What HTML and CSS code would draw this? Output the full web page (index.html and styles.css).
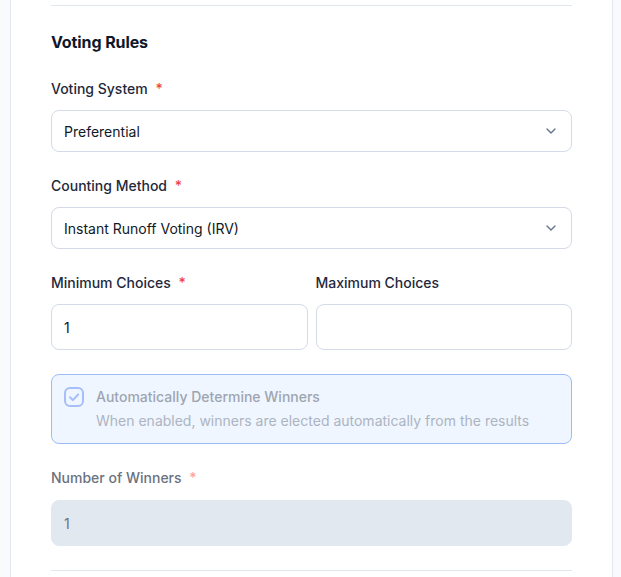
FILE: index.html
```html
<!DOCTYPE html>
<html lang="en">
<head>
<meta charset="utf-8">
<title>Voting Rules</title>
<link rel="stylesheet" href="styles.css">
</head>
<body>
<div class="card">
  <div class="divider"></div>
  <h2 class="heading">Voting Rules</h2>
  <div class="fields">
    <div class="field">
      <label class="label">Voting System <span class="req">*</span></label>
      <div class="select">
        <span>Preferential</span>
        <svg class="chev" width="16" height="16" viewBox="0 0 24 24" fill="none" stroke="#64748b" stroke-width="2" stroke-linecap="round" stroke-linejoin="round"><path d="m6 9 6 6 6-6"/></svg>
      </div>
    </div>
    <div class="field">
      <label class="label">Counting Method <span class="req">*</span></label>
      <div class="select">
        <span>Instant Runoff Voting (IRV)</span>
        <svg class="chev" width="16" height="16" viewBox="0 0 24 24" fill="none" stroke="#64748b" stroke-width="2" stroke-linecap="round" stroke-linejoin="round"><path d="m6 9 6 6 6-6"/></svg>
      </div>
    </div>
    <div class="row">
      <div class="field">
        <label class="label">Minimum Choices <span class="req">*</span></label>
        <div class="input">1</div>
      </div>
      <div class="field">
        <label class="label">Maximum Choices</label>
        <div class="input"></div>
      </div>
    </div>
    <div class="check-box">
      <svg class="check-icon" width="20" height="20" viewBox="0 0 20 20" fill="none" stroke="#a6befb" stroke-width="2" stroke-linecap="round" stroke-linejoin="round"><rect x="1" y="1" width="18" height="18" rx="5"/><path d="M6 10.3l2.8 2.8 5.4-5.6"/></svg>
      <div class="check-text">
        <div class="check-title">Automatically Determine Winners</div>
        <div class="check-desc">When enabled, winners are elected automatically from the results</div>
      </div>
    </div>
    <div class="field field-last">
      <label class="label muted">Number of Winners <span class="req faded">*</span></label>
      <div class="input disabled">1</div>
    </div>
  </div>
  <div class="divider bottom"></div>
</div>
</body>
</html>
```

FILE: styles.css
```css
* { box-sizing: border-box; }
html, body { margin: 0; padding: 0; }
body {
  background: #f8fafc;
  font-family: Inter, "Noto Sans", "Liberation Sans", sans-serif;
  color: #0f172a;
  height: 577px;
  overflow: hidden;
}
.card {
  margin-left: 10px;
  width: 603px;
  min-height: 577px;
  background: #ffffff;
  border-left: 1px solid #e2e8f0;
  border-right: 1px solid #e2e8f0;
  padding: 5px 40px 0 40px;
}
.divider {
  height: 1px;
  background: #e2e8f0;
}
.divider.bottom { margin-top: 24px; }
.heading {
  margin: 24px 0 25px 0;
  font-size: 16px;
  line-height: 24px;
  font-weight: 700;
  color: #0f172a;
  letter-spacing: -0.1px;
}
.fields {
  display: flex;
  flex-direction: column;
  gap: 24px;
}
.field {
  display: flex;
  flex-direction: column;
  gap: 11px;
  min-width: 0;
}
.field.field-last { gap: 12px; }
.row {
  display: grid;
  grid-template-columns: 1fr 1fr;
  gap: 8px;
}
.label {
  font-size: 14px;
  line-height: 20px;
  font-weight: 500;
  color: #1e293b;
}
.label.muted { color: #6b7280; }
.req {
  color: #ef4444;
  margin-left: 4px;
}
.req.faded { color: #fca5a5; }
.select, .input {
  display: flex;
  align-items: center;
  border: 1px solid #d3dbe6;
  border-radius: 8px;
  background: #ffffff;
  font-size: 14px;
  color: #111827;
  padding: 0 12px;
}
.select {
  height: 42px;
  justify-content: space-between;
}
.input { height: 46px; }
.input.disabled {
  background: #e2e8f0;
  border-color: #e2e8f0;
  color: #6b7280;
}
.check-box {
  display: flex;
  align-items: flex-start;
  gap: 12px;
  height: 70px;
  padding: 12px;
  background: #eff6ff;
  border: 1px solid #9dbbf8;
  border-radius: 8px;
}
.check-icon {
  flex: none;
}
.check-text {
  display: flex;
  flex-direction: column;
  gap: 4px;
}
.check-title {
  font-size: 14px;
  line-height: 20px;
  font-weight: 500;
  color: #9ea5b1;
}
.check-desc {
  font-size: 14px;
  line-height: 20px;
  color: #adb4bf;
}
```
